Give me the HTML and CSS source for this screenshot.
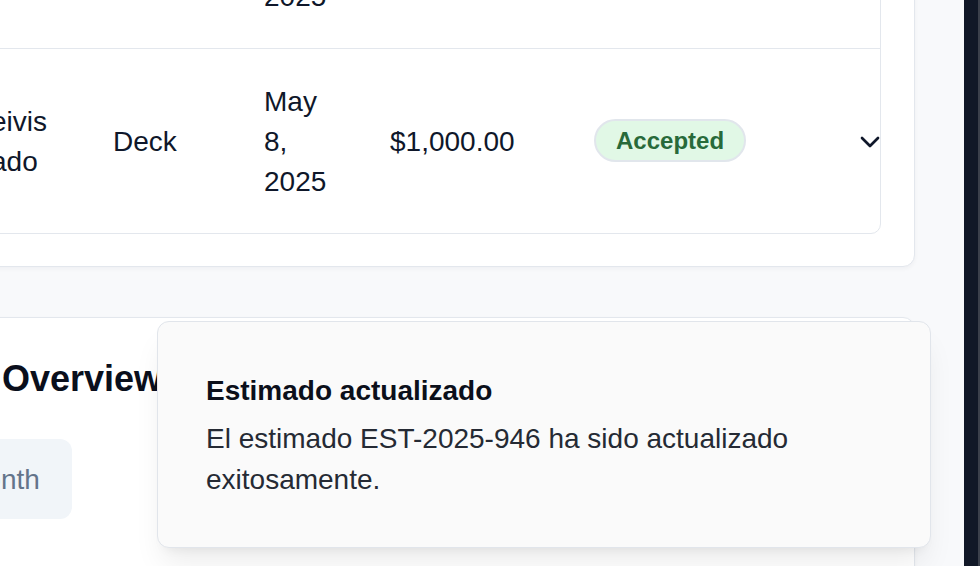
FILE: index.html
```html
<!DOCTYPE html>
<html lang="es">
<head>
<meta charset="utf-8">
<title>Estimates</title>
<link rel="stylesheet" href="styles.css">
</head>
<body>
<div class="app">
  <main class="main">
    <div class="content">
      <section class="card card-table">
        <div class="table-wrap">
          <div class="row">
            <div class="cell name"></div>
            <div class="cell"></div>
            <div class="cell date">Apr 28, 2025</div>
            <div class="cell"></div>
            <div class="cell"></div>
            <div class="cell"></div>
          </div>
          <div class="row last">
            <div class="cell name">eivis ado</div>
            <div class="cell">Deck</div>
            <div class="cell date">May 8, 2025</div>
            <div class="cell">$1,000.00</div>
            <div class="cell status"><span class="badge">Accepted</span></div>
            <div class="cell action">
              <svg class="chevron" viewBox="0 0 24 24" width="32" height="32" fill="none" stroke="currentColor" stroke-width="2" stroke-linecap="round" stroke-linejoin="round"><path d="m6 9 6 6 6-6"/></svg>
            </div>
          </div>
        </div>
      </section>
      <section class="card card-overview">
        <h2 class="overview-title">Overview</h2>
        <div class="tabs">
          <span class="tab">Month</span>
        </div>
      </section>
    </div>
    <div class="toast" role="status">
      <div class="toast-title">Estimado actualizado</div>
      <div class="toast-desc">El estimado EST-2025-946 ha sido actualizado exitosamente.</div>
    </div>
  </main>
  <div class="scrollbar"></div>
</div>
</body>
</html>
```

FILE: styles.css
```css
* { box-sizing: border-box; }

html, body {
  margin: 0;
  padding: 0;
  background: #f8f9fb;
  font-family: "Liberation Sans", Arial, sans-serif;
  color: #0f172a;
}

.app {
  display: flex;
  width: 980px;
  height: 566px;
  overflow: hidden;
}

.main {
  position: relative;
  flex: 1;
  overflow: hidden;
  background: #f8f9fb;
}

.scrollbar {
  width: 16px;
  background: #111827;
  border-right: 2px solid #3b404b;
}

.content {
  display: flex;
  flex-direction: column;
  gap: 50px;
  margin: -170px 49px 0 -103px;
}

.card {
  background: #ffffff;
  border: 1px solid #e3e7ed;
  border-radius: 12px;
  box-shadow: 0 2px 4px rgba(15, 23, 42, 0.04);
}

.card-table {
  padding: 32px 33px;
}

.table-wrap {
  border: 1px solid #e3e7ed;
  border-radius: 10px;
  overflow: hidden;
  background: #ffffff;
}

.row {
  display: grid;
  grid-template-columns: 122px 151px 126px 204px 260px 96px;
  align-items: center;
  padding-left: 27px;
  border-bottom: 1px solid #e3e7ed;
  font-size: 28px;
  line-height: 40px;
  color: #0f172a;
}

.row.last {
  border-bottom: none;
}

.cell {
  padding: 33px 32px 31px;
  white-space: normal;
}

.cell.status {
  padding-top: 31px;
  padding-bottom: 33px;
}

.action {
  display: flex;
  align-items: center;
}

.chevron {
  display: block;
  color: #0f172a;
}

.badge {
  display: inline-block;
  height: 43px;
  line-height: 39px;
  padding: 0 20px;
  border: 2px solid #e1e6ec;
  border-radius: 999px;
  background: #e1f8e6;
  color: #286a3a;
  font-size: 24px;
  font-weight: 700;
  white-space: nowrap;
}

.card-overview {
  padding: 33px 32px 32px;
  min-height: 420px;
}

.overview-title {
  margin: 0 0 32px;
  padding-left: 72px;
  font-size: 36px;
  line-height: 56px;
  font-weight: 700;
  color: #0a0f1c;
}

.tabs {
  display: inline-flex;
  height: 80px;
  padding: 9px 8px 7px;
  border-radius: 12px;
  background: #f1f5f9;
}

.tab {
  padding: 0 24px;
  font-size: 28px;
  line-height: 64px;
  color: #64748b;
}

.toast {
  position: absolute;
  left: 157px;
  top: 321px;
  width: 774px;
  padding: 49px 64px 47px 48px;
  background: #fafafa;
  border: 1px solid #e1e5eb;
  border-radius: 12px;
  box-shadow: 0 20px 30px -6px rgba(0, 0, 0, 0.08), 0 8px 12px -8px rgba(0, 0, 0, 0.08);
}

.toast-title {
  font-size: 28px;
  line-height: 40px;
  font-weight: 700;
  color: #0b0f1a;
}

.toast-desc {
  margin-top: 8px;
  font-size: 28px;
  line-height: 40.5px;
  color: #252a34;
}
```
